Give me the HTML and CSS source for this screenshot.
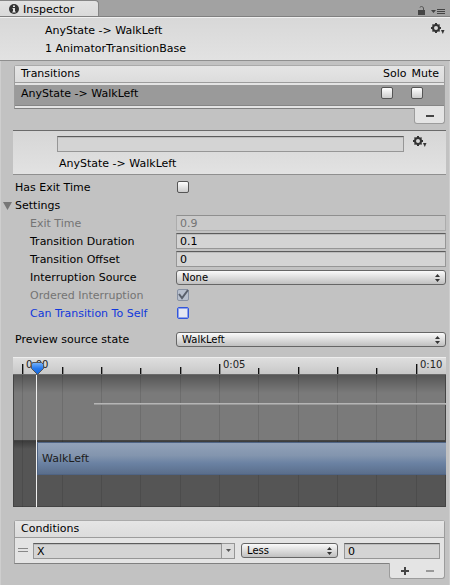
FILE: index.html
```html
<!DOCTYPE html>
<html lang="en">
<head>
<meta charset="utf-8">
<title>Inspector</title>
<link rel="stylesheet" href="styles.css">
</head>
<body>
<svg class="defs" aria-hidden="true">
  <symbol id="gear" viewBox="0 0 14 12">
    <g fill="#333">
      <circle cx="5" cy="5" r="3" fill="none" stroke="#333" stroke-width="2"/>
      <path d="M4 0h2v2H4zM4 8h2v2H4zM0 4h2v2H0zM8 4h2v2H8zM1 2l1-1 1.500 1.500-1 1zM7 2.500L8 1l1 1-1.500 1.500zM1 8l1.500-1.500 1 1L2 9zM7 7.500l1-1L9 8 8 9z"/>
      <path d="M10 7h3.500l-1.700 4z"/>
    </g>
  </symbol>
  <symbol id="updown" viewBox="0 0 5 8"><path d="M0 3L2.500 0 5 3zM0 5h5L2.500 8z" fill="#333"/></symbol>
</svg>
<div class="inspector">
  <div class="tabbar">
    <div class="tab">
      <svg width="10" height="10" viewBox="0 0 10 10"><circle cx="5" cy="5" r="5" fill="#333"/><path d="M4 1.500h2v1.500H4zM3.500 4H6v3.500h.7v1H3.300v-1H4V5h-.5z" fill="#e4e4e4"/></svg>
      <span>Inspector</span>
    </div>
    <button class="icon lock" aria-label="Lock"><svg width="8" height="9" viewBox="0 0 8 9"><path d="M0 4h7v5H0z" fill="#444"/><path d="M2 1.500Q2 .5 3.500.5T5.500 2v2" fill="none" stroke="#555"/></svg></button>
    <button class="icon" aria-label="Menu"><svg width="14" height="6" viewBox="0 0 14 6"><path d="M0 1h5L2.500 4zM6 0h8v1H6zM6 2h8v1H6zM6 4h8v1H6z" fill="#444"/></svg></button>
  </div>

  <header class="head">
    <div class="head-text"><div>AnyState -&gt; WalkLeft</div><div>1 AnimatorTransitionBase</div></div>
    <button class="icon" aria-label="Options"><svg width="14" height="12"><use href="#gear"/></svg></button>
  </header>

  <main class="content">
    <section class="list">
      <div class="list-box">
        <div class="list-head"><span class="grow">Transitions</span><span>Solo</span><span class="mute">Mute</span></div>
        <div class="transition">
          <span class="grow">AnyState -&gt; WalkLeft</span>
          <input type="checkbox" aria-label="Solo"><input type="checkbox" aria-label="Mute">
        </div>
      </div>
      <div class="list-foot"><button aria-label="Remove transition"><svg width="10" height="10"><path d="M1 4h8v2H1z" fill="#444"/></svg></button></div>
    </section>

    <section class="subhead">
      <div class="subhead-main">
        <input type="text" class="text" aria-label="Transition name">
        <div>AnyState -&gt; WalkLeft</div>
      </div>
      <button class="icon" aria-label="Transition options"><svg width="14" height="12"><use href="#gear"/></svg></button>
    </section>

    <div class="fields">
      <div class="row"><label for="hasExit">Has Exit Time</label><input type="checkbox" id="hasExit"></div>
      <div class="row"><button class="fold" aria-expanded="true"><svg width="9" height="8"><path d="M0 0h9L4.500 8z" fill="#777"/></svg>Settings</button></div>
      <div class="row sub off"><label for="exit">Exit Time</label><input type="text" class="text" id="exit" value="0.9" disabled></div>
      <div class="row sub"><label for="dur">Transition Duration</label><input type="text" class="text" id="dur" value="0.1"></div>
      <div class="row sub"><label for="ofs">Transition Offset</label><input type="text" class="text" id="ofs" value="0"></div>
      <div class="row sub"><label for="src">Interruption Source</label><span class="select"><select id="src"><option>None</option></select><svg width="5" height="8"><use href="#updown"/></svg></span></div>
      <div class="row sub off"><label for="ord">Ordered Interruption</label><span class="check"><input type="checkbox" id="ord" checked disabled><svg width="12" height="12"><path d="M2 5l3 4 6-8" fill="none" stroke="#59606c" stroke-width="2"/></svg></span></div>
      <div class="row sub focus"><label for="self">Can Transition To Self</label><input type="checkbox" id="self"></div>
      <div class="row preview"><label for="prev">Preview source state</label><span class="select"><select id="prev"><option>WalkLeft</option></select><svg width="5" height="8"><use href="#updown"/></svg></span></div>
    </div>

    <section class="timeline">
      <div class="ruler"><span>0:00</span><span>0:05</span><span>0:10</span></div>
      <div class="track upper"></div>
      <div class="track lower"><div class="clip">WalkLeft</div></div>
      <svg class="marks" aria-hidden="true">
        <defs><linearGradient id="knob" x2="0" y2="1"><stop stop-color="#79b4fa"/><stop offset=".5" stop-color="#2779ec"/><stop offset="1" stop-color="#1264d8"/></linearGradient></defs>
        <path fill="#000" fill-opacity=".1" d="M9 18h1v67H9zM49 18h1v67h-1zM88 18h1v67h-1zM127 18h1v67h-1zM167 18h1v67h-1zM206 18h1v67h-1zM245 18h1v67h-1zM285 18h1v67h-1zM324 18h1v67h-1zM363 18h1v67h-1zM403 18h1v67h-1zM9 85h1v65H9zM49 118h1v32h-1zM88 118h1v32h-1zM127 118h1v32h-1zM167 118h1v32h-1zM206 118h1v32h-1zM245 118h1v32h-1zM285 118h1v32h-1zM324 118h1v32h-1zM363 118h1v32h-1zM403 118h1v32h-1z"/>
        <path fill="#888" d="M10 7h1v10h-1zM50 10h1v7h-1zM89 10h1v7h-1zM128 11h1v6h-1zM168 10h1v7h-1zM207 7h1v10h-1zM246 11h1v6h-1zM286 10h1v7h-1zM325 10h1v7h-1zM364 11h1v6h-1zM404 7h1v10h-1z"/>
        <path fill="#111" d="M9 7h1v10H9zM49 10h1v7h-1zM88 10h1v7h-1zM127 11h1v6h-1zM167 10h1v7h-1zM206 7h1v10h-1zM245 11h1v6h-1zM285 10h1v7h-1zM324 10h1v7h-1zM363 11h1v6h-1zM403 7h1v10h-1z"/>
        <path fill="#b5b5b5" d="M81 46h2000v1H81z"/><path fill="#999" d="M81 47h2000v1H81z"/>
        <path fill="#f0f0f0" d="M23 18h1v132h-1z"/>
        <path d="M19.500 5.500h9l2 2v4l-6 6-6-6v-4z" fill="url(#knob)" stroke="#565656"/>
      </svg>
    </section>

    <section class="list conditions">
      <div class="list-box">
        <div class="list-head"><span class="grow">Conditions</span></div>
        <div class="condition">
          <svg width="10" height="5"><path d="M0 0h10v1H0zM0 3h10v1H0z" fill="#888"/></svg>
          <span class="combo"><input type="text" class="text" value="X" aria-label="Parameter"><button aria-label="Choose parameter"><svg width="5" height="3"><path d="M0 0h5L2.500 3z" fill="#555"/></svg></button></span>
          <span class="select"><select aria-label="Comparison"><option>Less</option></select><svg width="5" height="8"><use href="#updown"/></svg></span>
          <input type="text" class="text" value="0" aria-label="Threshold">
        </div>
      </div>
      <div class="list-foot"><button aria-label="Add condition"><svg width="10" height="10"><path d="M1 4h8v2H1zM4 1h2v8H4z" fill="#444"/></svg></button><button aria-label="Remove condition"><svg width="10" height="10"><path d="M1 4h8v2H1z" fill="#999"/></svg></button></div>
    </section>
  </main>
</div>
</body>
</html>
```
FILE: styles.css
```css
* { box-sizing: border-box; }
body { margin: 0; min-height: 100vh; background: #c2c2c2; color: #000; font: 11px/16px "DejaVu Sans", Verdana, sans-serif; }
svg { display: block; flex: none; }
.defs { position: absolute; width: 0; height: 0; }
button, input, select { margin: 0; padding: 0; font: inherit; color: inherit; border-radius: 0; }
button { background: none; border: 0; }
.grow { flex: 1; }

.inspector { min-height: 100vh; border-left: 1px solid #cecece; border-right: 1px solid #cecece; }
.tabbar { display: flex; align-items: flex-end; height: 17px; margin: 0 -1px; padding-right: 5px; background: #a2a2a2; border-bottom: 1px solid #808080; }
.tab { display: flex; align-items: center; gap: 4px; width: 99px; height: 16px; padding-left: 9px; margin-right: auto; background: linear-gradient(#e2e2e2, #dadada); border: 1px solid #858585; border-width: 1px 1px 0 0; border-radius: 0 4px 0 0; }
.tab span { padding-top: 2px; }
.tabbar .icon { padding-bottom: 1px; }
.lock { margin-right: 5px; }

.head { display: flex; align-items: flex-start; height: 44px; margin: 0 -1px; padding: 5px 5px 0 45px; line-height: 18px; background: linear-gradient(#d8d8d8, #e2e2e2); border-top: 1px solid #f0f0f0; border-bottom: 1px solid #8f8f8f; }
.head-text { flex: 1; margin-top: -1px; }

.content { padding: 4px 3px 0 12px; }
.list { padding: 0 1px; }
.list-box { background: #e4e4e4; border: 1px solid #9c9c9c; border-color: #aaa #9c9c9c #808080; border-radius: 3px 3px 0 0; }
.list-head { display: flex; height: 17px; padding: 0 5px 0 6px; background: linear-gradient(#e5e5e5, #dcdcdc); border-bottom: 1px solid #9c9c9c; }
.mute { margin-left: 5px; }
.transition { display: flex; align-items: flex-start; height: 21px; margin: 2px 0; padding: 0 21px 0 6px; line-height: 18px; background: #9a9a9a; border-bottom: 1px solid #858585; }
.transition input { margin: 2px 0 0 18px; }
.list-foot { display: flex; width: fit-content; height: 16px; margin: -1px 0 0 auto; padding: 0 7px 0 8px; gap: 11px; position: relative; background: #e4e4e4; border: 1px solid #9c9c9c; border-top: 0; border-radius: 0 0 3px 3px; }
.list-foot button { padding: 0 2px; }

.subhead { display: flex; align-items: flex-start; gap: 9px; height: 45px; margin-top: 6px; padding: 5px 19px 0 44px; background: linear-gradient(#d6d6d6, #e2e2e2); border-top: 1px solid #6a6a6a; border-bottom: 1px solid #8f8f8f; }
.subhead-main { flex: 1; line-height: 24px; }
.subhead-main div { padding-left: 2px; }

input[type="checkbox"] { flex: none; display: block; appearance: none; width: 12px; height: 12px; background: linear-gradient(#fff, #ccc); border: 1px solid #555; border-radius: 2px; }
.text { display: block; width: 100%; height: 16px; padding: 2px 3px 0; background: #d4d4d4; border: 1px solid #969696; border-top-color: #5c5c5c; box-shadow: inset 0 1px #bcbcbc; outline: 0; }

.fields { padding: 3px 0 0 2px; }
.row { display: flex; align-items: center; height: 18px; }
.row label { flex: 0 0 161px; padding-top: 2px; }
.row > input[type="checkbox"], .check { margin-left: 1px; }
.row .select { flex: 1; }
.sub label { padding-left: 15px; }
.off label { color: #747474; }
.off .text { color: #747474; background: #cacaca; border-color: #acacac; border-top-color: #8f8f8f; box-shadow: none; }
.check { position: relative; }
.check input[type="checkbox"] { background: #b8c0ce; border-color: #8791a3; }
.check svg { position: absolute; left: 0; top: 0; }
.focus label { color: #1038dc; }
.focus input[type="checkbox"] { border-color: #3055dd; box-shadow: inset 0 0 0 1px #8da0e8; background: #e4e7f2; }
.fold { display: flex; align-items: center; gap: 3px; margin-left: -12px; padding-top: 2px; }
.preview { margin-top: 8px; }

.select { position: relative; display: block; }
.select select { display: block; appearance: none; width: 100%; height: 15px; padding: 1px 5px 0; font-size: 10px; line-height: 12px; background: linear-gradient(#fafafa, #c0c0c0); border: 1px solid #666; border-radius: 3px; outline: 0; }
.select svg { position: absolute; right: 6px; top: 4px; pointer-events: none; }

.timeline { position: relative; margin-top: 9px; overflow: hidden; }
.ruler { display: flex; height: 18px; padding-left: 13px; font-size: 10px; line-height: 14px; color: #222; background: linear-gradient(#dedede, #c8c8c8); border-top: 1px solid #eee; border-bottom: 1px solid #6a6a6a; }
.ruler span { flex: 0 0 197px; }
.track { height: 66px; border: 1px solid #444; border-width: 0 1px 1px; }
.upper { background: linear-gradient(#565656, #7a7a7a 18px); }
.lower { background: linear-gradient(#3c3c3c, #555 8px); padding: 1px 0 0 23px; }
.clip { height: 33px; margin-right: -1px; padding-left: 4px; line-height: 32px; color: #1c1c1c; background: linear-gradient(#92a2b9, #8395ae 40%, #6b82a3 65%, #5a6e8b); border: 1px solid #4f6484; border-right: 0; }
.marks { position: absolute; left: 0; top: 0; width: 100%; height: 150px; }

.conditions { margin-top: 13px; }
.condition { display: flex; align-items: center; height: 25px; padding: 0 4px 0 3px; }
.combo { display: flex; flex: 0 0 202px; margin: 0 6px 0 5px; }
.combo button { display: flex; align-items: center; justify-content: center; flex: 0 0 13px; background: #dcdcdc; border: 1px solid #969696; border-left: 0; }
.condition .select { flex: 0 0 97px; margin-right: 6px; }
.condition > .text { flex: 1; min-width: 0; }
```
